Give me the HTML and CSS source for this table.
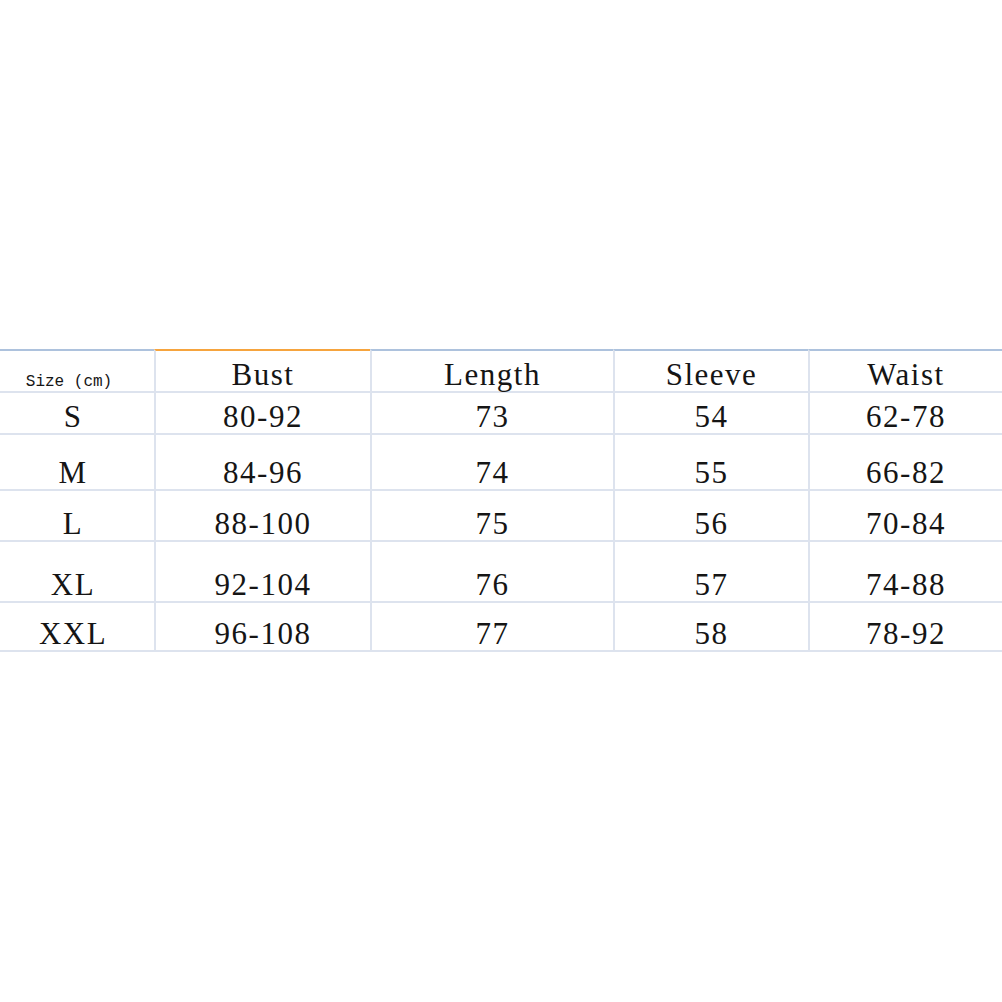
FILE: index.html
```html
<!DOCTYPE html>
<html>
<head>
<meta charset="utf-8">
<link rel="stylesheet" href="styles.css">
</head>
<body>
<div class="page">
  <table class="sizes">
    <colgroup>
      <col class="c1"><col class="c2"><col class="c3"><col class="c4"><col class="c5">
    </colgroup>
    <thead>
      <tr class="r-head">
        <th class="label">Size (cm)</th>
        <th class="hl">Bust</th>
        <th>Length</th>
        <th>Sleeve</th>
        <th>Waist</th>
      </tr>
    </thead>
    <tbody>
      <tr class="r-s"><td>S</td><td>80-92</td><td>73</td><td>54</td><td>62-78</td></tr>
      <tr class="r-m"><td>M</td><td>84-96</td><td>74</td><td>55</td><td>66-82</td></tr>
      <tr class="r-l"><td>L</td><td>88-100</td><td>75</td><td>56</td><td>70-84</td></tr>
      <tr class="r-xl"><td>XL</td><td>92-104</td><td>76</td><td>57</td><td>74-88</td></tr>
      <tr class="r-xxl"><td>XXL</td><td>96-108</td><td>77</td><td>58</td><td>78-92</td></tr>
    </tbody>
  </table>
</div>
</body>
</html>
```
FILE: styles.css
```css
html, body {
  margin: 0;
  padding: 0;
  background: #ffffff;
}
.page {
  padding-top: 349px;
}
.sizes {
  width: 1002px;
  table-layout: fixed;
  border-collapse: separate;
  border-spacing: 0;
  font-family: "Liberation Serif", "Times New Roman", serif;
  font-size: 31px;
  color: #151515;
}
.c1 { width: 154px; }
.c2 { width: 216px; }
.c3 { width: 243px; }
.c4 { width: 195px; }
.c5 { width: 194px; }
.sizes th,
.sizes td {
  font-weight: normal;
  text-align: center;
  vertical-align: bottom;
  line-height: 1;
  padding: 0 0 1px 0;
  letter-spacing: 1.5px;
  border-bottom: 2px solid #dde3ee;
  border-left: 2px solid #dde3ee;
  white-space: nowrap;
}
.sizes th:first-child,
.sizes td:first-child {
  border-left: none;
  padding-right: 8px;
}
.sizes th {
  border-top: 2px solid #adc2dd;
}
.sizes th.hl {
  border-top-color: #f6a43e;
}
.sizes th.label {
  font-family: "Liberation Mono", "Courier New", monospace;
  font-size: 16px;
  letter-spacing: 0;
  padding-bottom: 1px;
  padding-right: 16px;
}
.r-head { height: 44px; }
.r-s { height: 42px; }
.r-m { height: 56px; }
.r-l { height: 51px; }
.r-xl { height: 61px; }
.r-xxl { height: 49px; }
```
